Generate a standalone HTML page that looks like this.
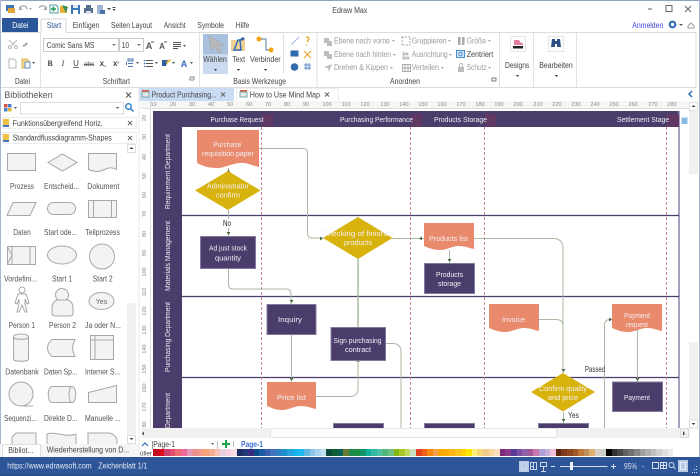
<!DOCTYPE html>
<html><head><meta charset="utf-8"><style>
html,body{margin:0;padding:0;background:#fff}
#w{position:relative;width:700px;height:476px;overflow:hidden;background:#fff}
svg{position:absolute;left:0;top:0}
text{font-family:"Liberation Sans",sans-serif;font-size:8px;fill:#444}
.d{font-size:7px;fill:#f2eff4;text-anchor:middle}
.c{text-anchor:middle}
.g{fill:#9a9a9a}
.l{font-size:8px;fill:#555}
.r{font-size:5.5px;fill:#888;text-anchor:middle}
.s{fill:#f3f3f3;stroke:#a8a8a8;stroke-width:1}
.k{fill:none;stroke:#a8b8a2;stroke-width:1}
.a{fill:#4f6b46}
.b{fill:#4a3d6b;stroke:#837aa0;stroke-width:1}
.o{fill:#e98a6d}
.y{fill:#d9b30d}
.dash{stroke:#c98496;stroke-width:1;stroke-dasharray:3 2}
.lane{stroke:#4a3d6b;stroke-width:1.2}
#p{position:absolute;left:153px;top:449px;display:flex}
#p i{display:block;width:5.6px;height:7px}
</style></head><body><div id="w">
<svg width="700" height="476" viewBox="0 0 700 476">
<!-- frame -->
<rect x="0" y="0" width="700" height="1" fill="#8fa2c4"/>
<rect x="0" y="0" width="1" height="457" fill="#a9b6cf"/>
<rect x="699" y="0" width="1" height="457" fill="#a9b6cf"/>
<!-- QAT -->
<rect x="6" y="5" width="8" height="6" fill="#3f76b8"/><rect x="8" y="8" width="7" height="5" fill="#e5a53a"/>
<path d="M20 8c2-3 6-3 7 1" fill="none" stroke="#aaa" stroke-width="1.3"/><path d="M19 6v4h4z" fill="#aaa"/>
<path d="M29 8h3l-1.5 2z" fill="#aaa"/>
<path d="M46 9c-1-4-5-4-7-1" fill="none" stroke="#aaa" stroke-width="1.3"/><path d="M47 6v4h-4z" fill="#aaa"/>
<path d="M50 5h6l2 2v6h-8z" fill="#fff" stroke="#5b9a9a"/><path d="M51 9h5M53.5 6.5v5" stroke="#1e9a50" stroke-width="1.5"/>
<path d="M60 6h7v7h-7z" fill="#e8b23a"/><path d="M62 5l6 2-2 6z" fill="#3c8f5a"/>
<path d="M71 5h9v9h-9z" fill="#3f78b8"/><rect x="73" y="5" width="5" height="3" fill="#dfe9f5"/><rect x="73" y="10" width="5" height="4" fill="#fff"/>
<path d="M84 8h9v5h-9z" fill="#55708f"/><rect x="86" y="5" width="5" height="3" fill="#55708f"/><rect x="86" y="11" width="5" height="3" fill="#dde"/>
<path d="M97 5h6v9h-6z" fill="#9fb6d3"/><path d="M100 10h5v4h-5z" fill="#4a72a8"/>
<path d="M107 8h4l-2 2z" fill="#444"/><path d="M112.5 7h3v1h-3zM112.5 9h3l-1.5 2z" fill="#444"/>
<text x="332.3" y="13" textLength="35" lengthAdjust="spacingAndGlyphs">Edraw Max</text>
<path d="M648 9h4" stroke="#666"/><rect x="666" y="5.5" width="6" height="6" fill="none" stroke="#666"/><path d="M685 6l6 6M691 6l-6 6" stroke="#666"/>
<!-- tabs -->
<rect x="2" y="18" width="36" height="14" fill="#2b579a"/>
<text x="12.3" y="28" style="fill:#fff" textLength="16" lengthAdjust="spacingAndGlyphs">Datei</text>
<path d="M41 32V19h25v13" fill="#fff" stroke="#d6d6d6"/>
<text x="46.7" y="28" style="fill:#2b579a" textLength="14.5" lengthAdjust="spacingAndGlyphs">Start</text>
<text x="72.7" y="28" textLength="26.6" lengthAdjust="spacingAndGlyphs">Einfügen</text>
<text x="111" y="28" textLength="41" lengthAdjust="spacingAndGlyphs">Seiten Layout</text>
<text x="163.7" y="28" textLength="22" lengthAdjust="spacingAndGlyphs">Ansicht</text>
<text x="197.3" y="28" textLength="26.7" lengthAdjust="spacingAndGlyphs">Symbole</text>
<text x="235.7" y="28" textLength="13.6" lengthAdjust="spacingAndGlyphs">Hilfe</text>
<text x="632.3" y="28" style="fill:#3b45d8" textLength="31" lengthAdjust="spacingAndGlyphs">Anmelden</text>
<circle cx="672.5" cy="24.5" r="2.8" fill="none" stroke="#2f6fb8" stroke-width="2.2"/>
<path d="M679 24h4l-2 2z" fill="#555"/>
<path d="M688 26l3-3 3 3v2h-6z" fill="none" stroke="#999"/>
<!-- ribbon -->
<path d="M1 32.500H41M66 32.500H696V87.500H1" fill="none" stroke="#dcdcdc"/>
<path d="M40.500 33v54M199.500 33v54M317 33v54M499.500 33v54M533.500 33v54M576.500 33v54" stroke="#e2e2e2"/>
<!-- clipboard -->
<g fill="none" stroke="#b8b8b8"><circle cx="10" cy="47" r="1.5"/><circle cx="16" cy="47" r="1.5"/><path d="M9 40l5 5M17 40l-5 5"/>
<path d="M9 59h5l2 2v7H9z"/></g>
<path d="M22 46l5-4 1 2-4 3z" fill="#aaa"/>
<path d="M22 59h5l2 2v7h-7z" fill="#f3d79a" stroke="#e2b04a"/><path d="M25 62h5v6h-5z" fill="#fff" stroke="#5b8ec4"/><path d="M32 62h3l-1.5 2z" fill="#555"/>
<!-- font -->
<rect x="43.5" y="38.5" width="75" height="13" fill="#fff" stroke="#ccc"/>
<text x="46.7" y="48" textLength="47.600" lengthAdjust="spacingAndGlyphs">Comic Sans MS</text><path d="M112 44h4l-2 2z" fill="#777"/>
<rect x="119.5" y="38.5" width="24" height="13" fill="#fff" stroke="#ccc"/>
<text x="121.7" y="48" textLength="7.300" lengthAdjust="spacingAndGlyphs">10</text><path d="M137 44h4l-2 2z" fill="#777"/>
<text x="149" y="49" class="c" style="font-size:9px;font-weight:bold;fill:#555">A</text><path d="M151 42h3" stroke="#555"/>
<text x="162" y="49" class="c" style="font-size:8px;font-weight:bold;fill:#555">A</text><path d="M164 42h3" stroke="#555"/>
<path d="M173 42.500h8M173 44.500h8M173 46.500h8M173 48.500h5" stroke="#555"/><path d="M183 45h3l-1.5 2z" fill="#555"/>
<g>
<text x="50" y="66" class="c" style="font-weight:bold;font-family:'Liberation Serif',serif">B</text>
<text x="63" y="66" class="c" style="font-style:italic;font-family:'Liberation Serif',serif">I</text>
<text x="76" y="66" class="c" style="text-decoration:underline">U</text>
<text x="89" y="66" class="c" style="font-size:6.5px;text-decoration:line-through">abc</text>
<text x="103" y="66" class="c" style="font-weight:bold">x<tspan font-size="5" dy="1">₂</tspan></text>
<text x="116" y="66" class="c" style="font-weight:bold">x<tspan font-size="5" dy="-1">²</tspan></text>
</g>
<path d="M128 59h5v2h-5zM128 63.500h5M128 66.500h5" stroke="#4a75b0" fill="none"/><path d="M126 62h1v3h-1z" fill="#4a75b0"/><path d="M136 62h3l-1.5 2z" fill="#555"/>
<path d="M146 60.500h7M146 63.500h7M146 66.500h7" stroke="#555"/><circle cx="144.5" cy="60.500" r=".8" fill="#3b70b8"/><circle cx="144.5" cy="63.500" r=".8" fill="#3b70b8"/><circle cx="144.5" cy="66.500" r=".8" fill="#3b70b8"/><path d="M155 62h3l-1.5 2z" fill="#555"/>
<path d="M162 60h6l-2 6h-4z" fill="#2f5f9f"/><path d="M166 62l4-3 1 1-4 4z" fill="#e5b432"/><path d="M172 62h3l-1.5 2z" fill="#555"/>
<text x="184" y="67" class="c" style="font-size:9px;font-weight:bold;fill:#2f6fb8">A</text><path d="M190 62h3l-1.5 2z" fill="#555"/>
<path d="M190 77h4v3M190 77v3h4" fill="none" stroke="#888"/>
<text x="15" y="84" textLength="15" lengthAdjust="spacingAndGlyphs">Datei</text>
<text x="102.7" y="84" textLength="27.300" lengthAdjust="spacingAndGlyphs">Schriftart</text>
<text x="233.3" y="84" textLength="52.700" lengthAdjust="spacingAndGlyphs">Basis Werkzeuge</text>
<text x="390" y="84" textLength="30" lengthAdjust="spacingAndGlyphs">Anordnen</text>
<!-- tools -->
<rect x="203" y="34" width="25" height="40" fill="#cbdaee"/><rect x="203" y="34" width="25" height="20" fill="#a9c0df"/>
<path d="M209 36l15 9-6 1 4 6-3 1-4-6-4 3z" fill="#b9b9b9" stroke="#a0a0a0" stroke-width=".5"/>
<text x="203.3" y="62" textLength="23.400" lengthAdjust="spacingAndGlyphs">Wählen</text><path d="M214 69h3l-1.5 2z" fill="#335"/>
<rect x="231" y="40" width="14" height="11" fill="#f1cf93"/><path d="M234 50l4-10h2l1 10z" fill="none" stroke="#2f6fb8" stroke-width="1.5"/><path d="M240 39l3-2 2 2-3 2z" fill="#335f99"/>
<text x="232.3" y="62" textLength="12.700" lengthAdjust="spacingAndGlyphs">Text</text><path d="M237 69h3l-1.5 2z" fill="#335"/>
<circle cx="259" cy="39" r="2.5" fill="#f5a214"/><circle cx="271" cy="50" r="2.5" fill="#f5a214"/><path d="M261 39h5v11h3" fill="none" stroke="#557aa8"/>
<text x="250" y="62" textLength="30.700" lengthAdjust="spacingAndGlyphs">Verbinder</text><path d="M264 69h3l-1.5 2z" fill="#335"/>
<path d="M283.500 34v39" stroke="#e0e0e0"/>
<path d="M291 45l8-8" stroke="#9ab8d8"/><path d="M306 37h2l1 2-2 3M306 45h1" fill="none" stroke="#e8a020" stroke-width="1.3"/>
<rect x="290.5" y="50.5" width="8" height="6" fill="#2f69ae"/><path d="M304 51l7 7M311 51l-7 7" stroke="#e8a020"/>
<circle cx="294.500" cy="67" r="3.800" fill="#2f69ae"/><path d="M304 65h7M306 63v7M309 63v7M304 68h7" stroke="#5d8ec4" fill="none"/>
<!-- Anordnen -->
<g fill="#bdbdbd"><rect x="324" y="38" width="5" height="5"/><rect x="327" y="41" width="5" height="5"/><rect x="324" y="51" width="5" height="5"/><rect x="327" y="54" width="5" height="5"/><path d="M324 67l8-3-3 8-1-4z"/></g>
<text x="334" y="43.500" class="g" textLength="56" lengthAdjust="spacingAndGlyphs">Ebene nach vorne</text>
<text x="334" y="57" class="g" textLength="57" lengthAdjust="spacingAndGlyphs">Ebene nach hinten</text>
<text x="334" y="70" class="g" textLength="54" lengthAdjust="spacingAndGlyphs">Drehen &amp; Kippen</text>
<text x="411.7" y="43.500" class="g" textLength="35" lengthAdjust="spacingAndGlyphs">Gruppieren</text>
<text x="411.7" y="57" class="g" textLength="36" lengthAdjust="spacingAndGlyphs">Ausrichtung</text>
<text x="411.7" y="70" class="g" textLength="27.300" lengthAdjust="spacingAndGlyphs">Verteilen</text>
<text x="466.7" y="43.500" class="g" textLength="19.300" lengthAdjust="spacingAndGlyphs">Größe</text>
<text x="466.7" y="57" textLength="26.600" lengthAdjust="spacingAndGlyphs">Zentriert</text>
<text x="466.7" y="70" class="g" textLength="20" lengthAdjust="spacingAndGlyphs">Schutz</text>
<path d="M392 40h3l-1.5 2zM393 54h3l-1.5 2zM390 67h3l-1.5 2zM448 40h3l-1.5 2zM449 54h3l-1.5 2zM441 67h3l-1.5 2zM488 40h3l-1.5 2zM488 67h3l-1.5 2z" fill="#aaa"/>
<rect x="402" y="37" width="8" height="8" fill="none" stroke="#aaa" stroke-dasharray="2 1"/><path d="M403 51v9M403 53h5v2h-5zM403 57h6v2h-6z" fill="#ccc" stroke="#aaa" stroke-width=".6"/>
<rect x="402.5" y="64.5" width="8" height="7" fill="none" stroke="#aaa"/><path d="M405 65v6M408 65v6M403 68h7" stroke="#aaa"/>
<rect x="458" y="37" width="2.5" height="8" fill="#aaa"/><rect x="462" y="37" width="2.5" height="8" fill="#aaa"/>
<rect x="456.5" y="50.5" width="8" height="7" fill="#d6e6f7" stroke="#4a90d0"/><circle cx="460.5" cy="54" r="1.8" fill="none" stroke="#4a90d0"/>
<rect x="458" y="67" width="6" height="5" fill="#bbb"/><path d="M459.5 67v-2c0-2 3-2 3 0v2" fill="none" stroke="#bbb"/>
<path d="M492 78h4v3M492 78v3h4" fill="none" stroke="#777"/>
<!-- designs -->
<rect x="510.5" y="36.5" width="15" height="15" fill="#fff" stroke="#e5e5e5"/>
<path d="M514 40h5l2 3h2v2h-9z" fill="#e47ba0"/><rect x="513" y="46" width="10" height="2.5" fill="#222"/>
<text x="505" y="68" textLength="24.300" lengthAdjust="spacingAndGlyphs">Designs</text><path d="M516 75h3l-1.5 2z" fill="#335"/>
<rect x="548.5" y="36.5" width="15" height="15" fill="#fff" stroke="#e5e5e5"/>
<path d="M552 39h3v2h2v-2h3l1 8h-4v-3h-2v3h-4z" fill="#2b4f86"/>
<text x="539.3" y="68" textLength="33.400" lengthAdjust="spacingAndGlyphs">Bearbeiten</text><path d="M555 75h3l-1.5 2z" fill="#335"/>
<path d="M692 91l-3 3 3 3" fill="none" stroke="#2f6fb8" stroke-width="1.5"/>

<!-- doc tabs -->
<rect x="139" y="88" width="95" height="13" fill="#c9dcf3"/>
<rect x="236.5" y="88.500" width="102" height="13" fill="#fff" stroke="#eee"/>
<rect x="142" y="90" width="7" height="2" fill="#d8604a"/><rect x="142" y="92" width="7" height="5" fill="#e8e8e8" stroke="#7aa"/>
<rect x="240" y="90" width="7" height="2" fill="#d8604a"/><rect x="240" y="92" width="7" height="5" fill="#e8e8e8" stroke="#7aa"/>
<text x="151.7" y="97.5" textLength="65" lengthAdjust="spacingAndGlyphs">Product Purchasing...</text>
<path d="M221 92.5l4 4M225 92.5l-4 4M325 92.5l4 4M329 92.5l-4 4" stroke="#666"/>
<text x="249.7" y="97.5" textLength="70.300" lengthAdjust="spacingAndGlyphs">How to Use Mind Map</text>
<!-- left panel -->
<text x="4.3" y="98" style="font-size:9px;fill:#555" textLength="48.400" lengthAdjust="spacingAndGlyphs">Bibliotheken</text>
<path d="M126 92.5l5 5M131 92.5l-5 5" stroke="#555"/>
<rect x="4" y="104" width="3.5" height="3.5" fill="#d8504a"/><rect x="8" y="104" width="3.5" height="3.5" fill="#4a80c8"/><rect x="4" y="108" width="3.5" height="3.5" fill="#4a80c8"/><rect x="8" y="108" width="3.5" height="3.5" fill="#e8b030"/>
<path d="M14 107h3l-1.5 2z" fill="#555"/>
<rect x="20.5" y="102.5" width="103" height="11.500" fill="#fff" stroke="#ddd"/><path d="M116 107h3l-1.5 2z" fill="#555"/>
<circle cx="128.5" cy="106.5" r="2.8" fill="none" stroke="#2f7fc8" stroke-width="1.4"/><path d="M130.5 108.5l3 3" stroke="#2f7fc8" stroke-width="1.5"/>
<rect x="2.5" y="117.5" width="134" height="11" fill="#fff" stroke="#ececec"/>
<rect x="2.5" y="132.5" width="134" height="11" fill="#fff" stroke="#ececec"/>
<rect x="3" y="119" width="6" height="8" fill="#f0c040"/><rect x="3" y="125" width="6" height="2" fill="#3f78c0"/>
<rect x="3" y="134" width="6" height="8" fill="#f0c040"/><rect x="3" y="140" width="6" height="2" fill="#3f78c0"/>
<text x="12.7" y="126" textLength="90" lengthAdjust="spacingAndGlyphs">Funktionsübergreifend Horiz.</text>
<text x="12.7" y="140.5" textLength="99" lengthAdjust="spacingAndGlyphs">Standardflussdiagramm-Shapes</text>
<path d="M128 121l4 4M132 121l-4 4M128 136l4 4M132 136l-4 4" stroke="#666"/>
<!-- shapes -->
<rect class="s" x="7.5" y="153.5" width="28" height="17"/>
<path class="s" d="M48 162.5l14.5-8.5 14.5 8.5-14.5 8.5z"/>
<path class="s" d="M88.5 153.5h28v16c-9-5-13 3-20 2-4-.5-6-1-8-2z"/>
<path class="s" d="M13 202.5h23l-6 13H7z"/>
<rect class="s" x="47.5" y="202.5" width="28" height="12" rx="6"/>
<rect class="s" x="88.5" y="200.5" width="28" height="17"/><path d="M93.5 200v18M111.5 200v18" stroke="#a8a8a8"/>
<rect class="s" x="7.5" y="246.5" width="28" height="18"/><path d="M12 246.5v18M30 246.5v18M7.5 247l4.5 8-4.5 9" fill="none" stroke="#a8a8a8"/>
<ellipse class="s" cx="62" cy="255" rx="14.5" ry="9"/>
<circle class="s" cx="102" cy="256.5" r="12.5"/>
<g fill="none" stroke="#a8a8a8"><circle cx="22" cy="290" r="3"/><path d="M18 294h8l3 9-2 1-2-5v5l2 8h-2l-3-7-3 7h-2l2-8v-5l-2 5-2-1z"/></g>
<circle class="s" cx="62" cy="295" r="6.5"/>
<path class="s" d="M52 308c0-5 3-8 6-8h9c3 0 6 3 6 8v5c0 2-1 3-3 3H55c-2 0-3-1-3-3z"/>
<ellipse class="s" cx="101.5" cy="301" rx="12.500" ry="8.500"/>
<text x="101.5" y="304" class="c" style="font-size:7px;fill:#666">Yes</text>
<path class="s" d="M13.5 337c0-4 15-4 15 0v22c0 3-15 3-15 0z"/><path d="M13.5 337c0 3 15 3 15 0" fill="none" stroke="#a8a8a8"/>
<path class="s" d="M52 339.5h23c-3 6-3 12 0 17H52c-6-5-6-12 0-17z"/>
<rect class="s" x="90.5" y="335.5" width="23" height="24"/><path d="M95 335.5v24M90.5 340h23" stroke="#a8a8a8"/>
<circle class="s" cx="21" cy="394" r="12"/><path d="M21 406h12" stroke="#a8a8a8"/>
<path class="s" d="M52 386.5h20c5 0 5 16 0 16H52c-5 0-5-16 0-16z"/><path d="M72 386.5c-4 0-4 16 0 16" fill="none" stroke="#a8a8a8"/>
<path class="s" d="M88.5 392.5l28-7v17h-28z"/>
<path class="s" d="M12 444v-7l4-4h20v12M47 444v-10c8-3 20 4 29 0v11M88 444v-11h20c5 0 9 4 9 8v4"/>
<text class="l" x="10" y="189" textLength="24" lengthAdjust="spacingAndGlyphs">Prozess</text>
<text class="l" x="44" y="189" textLength="35" lengthAdjust="spacingAndGlyphs">Entscheid...</text>
<text class="l" x="87.3" y="189" textLength="32" lengthAdjust="spacingAndGlyphs">Dokument</text>
<text class="l" x="13.3" y="235" textLength="17.400" lengthAdjust="spacingAndGlyphs">Daten</text>
<text class="l" x="44" y="235" textLength="33" lengthAdjust="spacingAndGlyphs">Start ode...</text>
<text class="l" x="85.3" y="235" textLength="34.700" lengthAdjust="spacingAndGlyphs">Teilprozess</text>
<text class="l" x="4" y="281.5" textLength="33" lengthAdjust="spacingAndGlyphs">Vordefini...</text>
<text class="l" x="52" y="281.5" textLength="20" lengthAdjust="spacingAndGlyphs">Start 1</text>
<text class="l" x="92.7" y="281.5" textLength="20" lengthAdjust="spacingAndGlyphs">Start 2</text>
<text class="l" x="8.7" y="328" textLength="26.300" lengthAdjust="spacingAndGlyphs">Person 1</text>
<text class="l" x="49" y="328" textLength="27" lengthAdjust="spacingAndGlyphs">Person 2</text>
<text class="l" x="85" y="328" textLength="36" lengthAdjust="spacingAndGlyphs">Ja oder N...</text>
<text class="l" x="5.3" y="374.5" textLength="33.400" lengthAdjust="spacingAndGlyphs">Datenbank</text>
<text class="l" x="44" y="374.5" textLength="33.400" lengthAdjust="spacingAndGlyphs">Daten Sp...</text>
<text class="l" x="85" y="374.5" textLength="35" lengthAdjust="spacingAndGlyphs">Interner S...</text>
<text class="l" x="4" y="421" textLength="32.700" lengthAdjust="spacingAndGlyphs">Sequenzi...</text>
<text class="l" x="44" y="421" textLength="33.400" lengthAdjust="spacingAndGlyphs">Direkte D...</text>
<text class="l" x="85" y="421" textLength="35.700" lengthAdjust="spacingAndGlyphs">Manuelle ...</text>
<rect x="127" y="144" width="9" height="300" fill="#f1f1f1"/><rect x="127" y="150" width="9" height="153" fill="#fff"/><rect x="127.5" y="144.500" width="8" height="8" fill="#fff" stroke="#ddd"/><rect x="127.5" y="435.500" width="8" height="8" fill="#fff" stroke="#ddd"/>
<path d="M129.5 149l2-2 2 2zM129.5 438l2 2 2-2z" fill="#444"/>
<rect x="0" y="444" width="138" height="13" fill="#f5f5f5"/>
<path d="M2.5 457v-12.500h38v12.500" fill="#fff" stroke="#ddd"/>
<text x="8.3" y="453" textLength="25" lengthAdjust="spacingAndGlyphs">Bibliot...</text>
<text x="46.7" y="452.5" textLength="82.400" lengthAdjust="spacingAndGlyphs">Wiederherstellung von D...</text>
<path d="M139 88v369" stroke="#e8e8e8"/>

<!-- rulers -->
<rect x="141" y="108" width="9" height="320" fill="#fff"/>
<rect x="141" y="101" width="548" height="7" fill="#f6f6f6"/>
<path d="M141 108.500H689" stroke="#ddd"/><path d="M150.500 101v327" stroke="#ddd"/>
<g>
<text class="r" x="153.5" y="106">10</text><text class="r" x="173" y="106">20</text><text class="r" x="192" y="106">30</text><text class="r" x="211" y="106">40</text><text class="r" x="230" y="106">50</text><text class="r" x="249" y="106">60</text><text class="r" x="268" y="106">70</text><text class="r" x="287" y="106">80</text><text class="r" x="306" y="106">90</text><text class="r" x="327" y="106">100</text><text class="r" x="346" y="106">110</text><text class="r" x="365" y="106">120</text><text class="r" x="385" y="106">130</text><text class="r" x="404" y="106">140</text><text class="r" x="423" y="106">150</text><text class="r" x="442" y="106">160</text><text class="r" x="461" y="106">170</text><text class="r" x="480" y="106">180</text><text class="r" x="499" y="106">190</text><text class="r" x="518" y="106">200</text><text class="r" x="538" y="106">210</text><text class="r" x="557" y="106">220</text><text class="r" x="576" y="106">230</text><text class="r" x="595" y="106">240</text><text class="r" x="614" y="106">250</text><text class="r" x="633" y="106">260</text><text class="r" x="653" y="106">270</text><text class="r" x="672" y="106">280</text>
</g>
<g>
<text class="r" transform="translate(146 118) rotate(-90)">20</text><text class="r" transform="translate(146 137) rotate(-90)">30</text><text class="r" transform="translate(146 157) rotate(-90)">40</text><text class="r" transform="translate(146 176) rotate(-90)">50</text><text class="r" transform="translate(146 195) rotate(-90)">60</text><text class="r" transform="translate(146 214) rotate(-90)">70</text><text class="r" transform="translate(146 234) rotate(-90)">80</text><text class="r" transform="translate(146 253) rotate(-90)">90</text><text class="r" transform="translate(146 272) rotate(-90)">100</text><text class="r" transform="translate(146 292) rotate(-90)">110</text><text class="r" transform="translate(146 311) rotate(-90)">120</text><text class="r" transform="translate(146 330) rotate(-90)">130</text><text class="r" transform="translate(146 349) rotate(-90)">140</text><text class="r" transform="translate(146 369) rotate(-90)">150</text><text class="r" transform="translate(146 388) rotate(-90)">160</text><text class="r" transform="translate(146 407) rotate(-90)">170</text><text class="r" transform="translate(146 426) rotate(-90)">180</text>
</g>

<!-- canvas -->
<rect x="153" y="111" width="526" height="16" fill="#4a3d6b"/>
<rect x="153" y="127" width="29" height="301" fill="#4a3d6b"/>
<path d="M679 111v317" stroke="#8a82a8" stroke-width="1.500"/>
<path d="M182 215.500H679M182 296.500H679M182 377.500H679" class="lane"/>
<g fill="#5f3863"><rect x="262" y="114" width="11" height="13"/><rect x="411" y="114" width="11" height="13"/><rect x="485" y="114" width="11" height="13"/><rect x="667" y="114" width="12" height="13"/></g>
<path d="M261.500 127V428M410.500 127V428M484.500 127V428M666.500 127V428" class="dash"/>
<text x="237" y="122" class="d" textLength="53" lengthAdjust="spacingAndGlyphs">Purchase Request</text>
<text x="376.5" y="122" class="d" textLength="73" lengthAdjust="spacingAndGlyphs">Purchasing Performance</text>
<text x="460.5" y="122" class="d" textLength="53" lengthAdjust="spacingAndGlyphs">Products Storage</text>
<text x="643" y="122" class="d" textLength="52" lengthAdjust="spacingAndGlyphs">Settlement Stage</text>
<text class="d" transform="translate(170 171.500) rotate(-90)" textLength="75" lengthAdjust="spacingAndGlyphs">Requirement Department</text>
<text class="d" transform="translate(170 256) rotate(-90)" textLength="70" lengthAdjust="spacingAndGlyphs">Materials Management</text>
<text class="d" transform="translate(170 337) rotate(-90)" textLength="70" lengthAdjust="spacingAndGlyphs">Purchasing Department</text>
<text class="d" transform="translate(170 410.500) rotate(-90)" textLength="35" lengthAdjust="spacingAndGlyphs">Department</text>

<!-- connectors -->
<path class="k" d="M228.500 168v4M259 148.500h44q4.500 0 4.500 4.500v80q0 5 5 5h11"/>
<path class="k" d="M228.500 210v26M228.500 268v17q0 4 5 4h53q4.500 0 4.500 5v10"/>
<path class="k" style="stroke-width:1.5" d="M358 327V258"/>
<path class="k" d="M291.500 334v48"/>
<path class="k" d="M316 396.500h34q8 0 8-8v-28"/>
<path class="k" d="M385 343.500h8q8 0 8 9v75.500"/>
<path class="k" d="M392 238.500h32M449.500 250v13"/>
<path class="k" d="M474 238.500h79q10 0 10 10v125"/>
<path class="k" d="M539 319.500h17q7 0 7 7"/>
<path class="k" d="M563.500 412v11"/>
<path class="k" d="M604.500 428V325q0-5.500 6-5.500h2"/>
<path class="k" d="M637.500 330v52"/>
<path class="a" d="M226.500 172.500l2-3 2 3zM226.500 232l2 3 2-3zM320 236.500l3 2-3 2zM289.500 300l2 3 2-3zM356 361.500l2-3 2 3zM289.500 378l2 3 2-3zM447.500 259l2 3 2-3zM561.500 369l2 3 2-3zM561.500 419l2 3 2-3zM609 317.500l3 2-3 2zM635.500 378l2 3 2-3zM422 236.500l-3 2 3 2z"/>

<!-- diagram shapes -->
<path class="o" d="M197 130h62v37c-6-1-12-5-20-4-9 1-14 5-22 5-9 0-14-2-20-5z"/>
<text class="d" x="227.3" y="147" textLength="28" lengthAdjust="spacingAndGlyphs">Purchase</text><text class="d" x="228" y="156" textLength="52" lengthAdjust="spacingAndGlyphs">requisition paper</text>
<path class="y" d="M195 190.500l33-19.500 32.500 19.500-32.500 19.500z"/>
<text class="d" x="228" y="188.500" textLength="42" lengthAdjust="spacingAndGlyphs">Administrator</text><text class="d" x="228" y="197.500" textLength="24" lengthAdjust="spacingAndGlyphs">confirm</text>
<rect class="b" x="200.5" y="236.5" width="55" height="32"/>
<text class="d" x="228" y="250.5" textLength="38" lengthAdjust="spacingAndGlyphs">Ad just stock</text><text class="d" x="228" y="260.5" textLength="26" lengthAdjust="spacingAndGlyphs">quantity</text>
<rect x="221" y="219" width="14" height="9" fill="#fff"/><text x="223" y="226" style="fill:#222" textLength="8" lengthAdjust="spacingAndGlyphs">No</text>
<path class="y" d="M323 238l35-21 34.500 21-34.500 21z"/>
<text class="d" x="358" y="236" textLength="72" lengthAdjust="spacingAndGlyphs">Checking of finished</text><text class="d" x="358" y="245" textLength="28" lengthAdjust="spacingAndGlyphs">products</text>
<path class="o" d="M424 223h50v26c-5-1-9-3-15-3-7 0-12 4-19 4-7 0-11-2-16-4z"/>
<text class="d" x="448.5" y="241" textLength="39" lengthAdjust="spacingAndGlyphs">Products list</text>
<rect class="b" x="424.5" y="263.5" width="50" height="30"/>
<text class="d" x="449.5" y="277" textLength="27" lengthAdjust="spacingAndGlyphs">Products</text><text class="d" x="449.5" y="286" textLength="23" lengthAdjust="spacingAndGlyphs">storage</text>
<rect class="b" x="267" y="304.5" width="49" height="30"/>
<text class="d" x="290" y="322" textLength="24" lengthAdjust="spacingAndGlyphs">Inquiry</text>
<rect class="b" x="331" y="327.500" width="54.500" height="33"/>
<text class="d" x="357.5" y="343" textLength="48" lengthAdjust="spacingAndGlyphs">Sign purchasing</text><text class="d" x="358" y="352" textLength="26" lengthAdjust="spacingAndGlyphs">contract</text>
<path class="o" d="M267 382h49v27c-5-1-9-3-15-3-7 0-12 4-19 4-7 0-10-2-15-4z"/>
<text class="d" x="291.5" y="400" textLength="29" lengthAdjust="spacingAndGlyphs">Price list</text>
<path class="b" d="M333.500 423.500h50v5h-50zM424.500 423.500h50v5h-50zM538.500 423.500h50v5h-50z"/>
<path class="o" d="M489 304h50v27c-5-1-9-3-15-3-7 0-12 4-19 4-7 0-11-2-16-4z"/>
<text class="d" x="513.5" y="322" textLength="23" lengthAdjust="spacingAndGlyphs">Invoice</text>
<path class="o" d="M612 304h50v27c-5-1-9-3-15-3-7 0-12 4-19 4-7 0-11-2-16-4z"/>
<text class="d" x="637" y="318" textLength="26" lengthAdjust="spacingAndGlyphs">Payment</text><text class="d" x="637" y="327" textLength="22" lengthAdjust="spacingAndGlyphs">request</text>
<path class="y" d="M531 392l32-19 32 19-32 19.500z"/>
<text class="d" x="563" y="391" textLength="48" lengthAdjust="spacingAndGlyphs">Confirm quality</text><text class="d" x="563" y="400" textLength="30" lengthAdjust="spacingAndGlyphs">and price</text>
<rect class="b" x="612.5" y="382" width="50" height="29.500"/>
<text class="d" x="637" y="400" textLength="26" lengthAdjust="spacingAndGlyphs">Payment</text>
<rect x="584" y="364" width="19" height="9" fill="#fff"/><text x="585" y="372" style="fill:#333" textLength="20" lengthAdjust="spacingAndGlyphs">Passed</text>
<text x="568" y="418" style="fill:#333" textLength="11" lengthAdjust="spacingAndGlyphs">Yes</text>
<!-- right bars -->
<rect x="681" y="117" width="7" height="7" fill="#cfe3f5"/><path d="M682 119h5M682 121h5M682 123h5" stroke="#3f90d0"/>
<rect x="689" y="102" width="9" height="326" fill="#f1f1f1"/><rect x="689" y="174" width="9" height="168" fill="#fff"/>
<rect x="689.5" y="102.5" width="8" height="8" fill="#fff" stroke="#ddd"/><rect x="689.5" y="420" width="8" height="8" fill="#fff" stroke="#ddd"/>
<path d="M691.5 107l2-2 2 2zM691.5 423l2 2 2-2z" fill="#444"/>
<rect x="141" y="428" width="549" height="10" fill="#f1f1f1"/>
<rect x="270.5" y="428.5" width="286" height="9" fill="#fff" stroke="#e4e4e4"/>
<path d="M144 431.5l-2 2 2 2zM683 431l2 2.5-2 2.500z" fill="#444"/>
<rect x="680.5" y="428.5" width="8" height="9" fill="none" stroke="#ddd"/>
<!-- page tabs -->
<path d="M142 446l3-3 3 3" fill="none" stroke="#2f6fb8" stroke-width="1.2"/>
<path d="M152.500 441v8" stroke="#999"/>
<text x="153.3" y="447" textLength="21.700" lengthAdjust="spacingAndGlyphs">Page-1</text>
<path d="M211 443h3l-1.5 2z" fill="#666"/><path d="M217.500 441v8M233.500 441v6" stroke="#bbb"/>
<path d="M222 444h8M226 440v8" stroke="#19a44c" stroke-width="2"/>
<text x="241" y="447" style="font-weight:bold;fill:#3f6fd0" textLength="22" lengthAdjust="spacingAndGlyphs">Page-1</text>
<text x="140" y="455.5" style="font-size:6.5px;fill:#444" textLength="12" lengthAdjust="spacingAndGlyphs">üller</text>
<!-- status -->
<rect x="0" y="457" width="700" height="19" fill="#2e5597"/>
<rect x="0" y="474.5" width="700" height="1.5" fill="#294d8c"/>
<text x="7.3" y="468.5" style="fill:#e3ebf7" textLength="84.400" lengthAdjust="spacingAndGlyphs">https://www.edrawsoft.com</text>
<text x="98.3" y="468.5" style="fill:#e3ebf7" textLength="49" lengthAdjust="spacingAndGlyphs">Zeichenblatt 1/1</text>
<rect x="519" y="461" width="10" height="11" fill="#b9cbe6"/>
<g fill="none" stroke="#c9d6ea"><rect x="521.500" y="463.500" width="5" height="6"/><rect x="530.500" y="462.500" width="6" height="7"/><path d="M533.500 463v7M530.500 466.500h3"/><rect x="540.500" y="462.500" width="6" height="4"/><path d="M543.500 467v4M541 471.500h5"/></g>
<path d="M551 466.500h4M560 466.500h47.500M611 466.500h5M613.500 464v5" stroke="#d6e0f0"/>
<rect x="570" y="462" width="3" height="8" fill="#eef3fa"/>
<text x="624" y="469" style="fill:#d6e0f0" textLength="13" lengthAdjust="spacingAndGlyphs">95%</text>
<path d="M642 466.500h2" stroke="#8aa3c8"/>
<g fill="none" stroke="#d6e0f0"><rect x="652.500" y="462.500" width="6" height="6"/><rect x="660.500" y="462.500" width="6" height="6"/><path d="M660.500 465.500h6M663.500 462.500v6"/><circle cx="671.500" cy="465" r="2.500"/><path d="M673.500 467l2 2"/></g>
<rect x="652" y="462" width="7" height="7" fill="none"/>
<rect x="678" y="460" width="10" height="12" fill="#b9cbe6"/><rect x="680.500" y="462.500" width="5" height="7" fill="none" stroke="#e6edf7"/>
<path d="M696 466h1v1h-1zM694 469h1v1h-1zM696 469h1v1h-1zM692 472h1v1h-1zM694 472h1v1h-1zM696 472h1v1h-1z" fill="#cbd8ec"/>
</svg>
<div id="p"><i style="background:#c00d23"></i><i style="background:#dc0a1e"></i><i style="background:#c94070"></i><i style="background:#e1506b"></i><i style="background:#ee6a72"></i><i style="background:#ef6a9a"></i><i style="background:#e897b8"></i><i style="background:#ef8f8f"></i><i style="background:#f29a8e"></i><i style="background:#f8a278"></i><i style="background:#f3b090"></i><i style="background:#f6c5b5"></i><i style="background:#e8d0e0"></i><i style="background:#f8cfe0"></i><i style="background:#fbdde6"></i><i style="background:#1c2f63"></i><i style="background:#203a7a"></i><i style="background:#3a2d80"></i><i style="background:#0f4c8a"></i><i style="background:#1b5ba6"></i><i style="background:#3b60ad"></i><i style="background:#4374bb"></i><i style="background:#2f83c5"></i><i style="background:#1e90d0"></i><i style="background:#2aa0d8"></i><i style="background:#12b2ee"></i><i style="background:#20b8f0"></i><i style="background:#60b8e0"></i><i style="background:#8cc4ea"></i><i style="background:#a8d4ee"></i><i style="background:#c4e0f0"></i><i style="background:#0d4a3a"></i><i style="background:#0f5e34"></i><i style="background:#0b5f5a"></i><i style="background:#6a7a2e"></i><i style="background:#1c8a4a"></i><i style="background:#1a9040"></i><i style="background:#11976b"></i><i style="background:#10b09a"></i><i style="background:#30b8a0"></i><i style="background:#50c0a8"></i><i style="background:#50b878"></i><i style="background:#70c080"></i><i style="background:#84b80e"></i><i style="background:#a8c82a"></i><i style="background:#c0d860"></i><i style="background:#c8e0c0"></i><i style="background:#e0401c"></i><i style="background:#f0601c"></i><i style="background:#f78a0e"></i><i style="background:#f8a050"></i><i style="background:#fba800"></i><i style="background:#fdb000"></i><i style="background:#fdb71a"></i><i style="background:#fdc120"></i><i style="background:#ffd000"></i><i style="background:#ffe600"></i><i style="background:#fff07a"></i><i style="background:#f8d878"></i><i style="background:#eccc8a"></i><i style="background:#fad8a0"></i><i style="background:#fbe0c0"></i><i style="background:#7d2a7d"></i><i style="background:#8c3a8c"></i><i style="background:#5e3a98"></i><i style="background:#7a50a0"></i><i style="background:#9060a8"></i><i style="background:#a05898"></i><i style="background:#c878b0"></i><i style="background:#b0a0d8"></i><i style="background:#c8b0d8"></i><i style="background:#f0c0d8"></i><i style="background:#5a2410"></i><i style="background:#80381e"></i><i style="background:#8c4820"></i><i style="background:#a05828"></i><i style="background:#c07838"></i><i style="background:#c09060"></i><i style="background:#e0b070"></i><i style="background:#d8d0c8"></i><i style="background:#c8d0c8"></i><i style="background:#000"></i><i style="background:#303030"></i><i style="background:#484848"></i><i style="background:#606060"></i><i style="background:#707070"></i><i style="background:#888"></i><i style="background:#a0a0a0"></i><i style="background:#b0b0b0"></i><i style="background:#c0c0c0"></i><i style="background:#d0d0d0"></i><i style="background:#e0e0e0"></i><i style="background:#ececec"></i></div>
</div></body></html>
